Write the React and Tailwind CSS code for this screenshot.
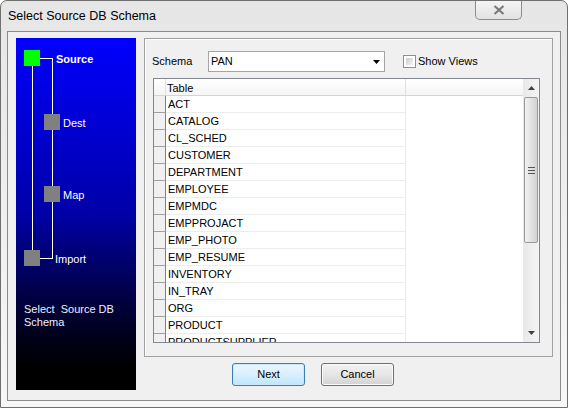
import React from 'react'

const rows = [
  'ACT', 'CATALOG', 'CL_SCHED', 'CUSTOMER', 'DEPARTMENT', 'EMPLOYEE', 'EMPMDC',
  'EMPPROJACT', 'EMP_PHOTO', 'EMP_RESUME', 'INVENTORY', 'IN_TRAY', 'ORG', 'PRODUCT',
  'PRODUCTSUPPLIER',
]

const font = { fontFamily: '"Liberation Sans", Arial, sans-serif' }

function WizardPanel() {
  return (
    <div className="relative w-[120px] h-[352px] shrink-0 bg-gradient-to-b from-[#0000ff] via-[#0000a8] to-[#000000] text-white text-[11px]">
      {/* tree lines and squares */}
      <svg className="absolute left-0 top-0" width="120" height="240">
        <line x1="16.5" y1="28" x2="16.5" y2="212" stroke="#fff" strokeWidth="1" />
        <line x1="24" y1="20.5" x2="36.5" y2="20.5" stroke="#fff" strokeWidth="1" />
        <line x1="36.5" y1="20" x2="36.5" y2="221" stroke="#fff" strokeWidth="1" />
        <line x1="24" y1="220.5" x2="37" y2="220.5" stroke="#fff" strokeWidth="1" />
        <rect x="8" y="12" width="16" height="16" fill="#00ff00" />
        <rect x="28" y="76" width="16" height="16" fill="#808080" />
        <rect x="28" y="148" width="16" height="16" fill="#808080" />
        <rect x="8" y="212" width="16" height="16" fill="#808080" />
      </svg>
      <span className="absolute left-[40px] top-[13px] font-bold">Source</span>
      <span className="absolute left-[47px] top-[77px]">Dest</span>
      <span className="absolute left-[47px] top-[149px]">Map</span>
      <span className="absolute left-[39px] top-[213px]">Import</span>
      <div className="absolute left-[8px] top-[265px] leading-[13px] text-[#f0f0ff]">
        Select&nbsp; Source DB<br />Schema
      </div>
    </div>
  )
}

function ScrollBar() {
  return (
    <div className="w-[16px] shrink-0 flex flex-col bg-gradient-to-r from-[#e8e8e8] to-[#f4f4f4]">
      <div className="h-[18px] flex items-center justify-center">
        <svg width="7" height="4"><path d="M0 4 L3.5 0 L7 4 Z" fill="#404040" /></svg>
      </div>
      <div className="mx-[1px] h-[146px] rounded-[2px] border border-[#9a9a9a] bg-gradient-to-r from-[#f3f3f3] via-[#e2e2e2] to-[#d2d2d2] flex flex-col items-center justify-center gap-[2px]">
        <div className="w-[7px] h-[1px] bg-[#555]" />
        <div className="w-[7px] h-[1px] bg-[#555]" />
        <div className="w-[7px] h-[1px] bg-[#555]" />
      </div>
      <div className="flex-1" />
      <div className="h-[18px] flex items-center justify-center">
        <svg width="7" height="4"><path d="M0 0 L7 0 L3.5 4 Z" fill="#404040" /></svg>
      </div>
    </div>
  )
}

function TableGrid() {
  return (
    <div className="ml-[8px] mt-[6px] w-[387px] h-[265px] border border-[#828790] bg-white flex overflow-hidden">
      <div className="flex-1 flex flex-col overflow-hidden">
        <div className="flex h-[17px] shrink-0 border-b border-[#d5d5d5] bg-gradient-to-b from-white to-[#f5f5f5]">
          <div className="w-[12px] border-r border-[#e0e0e0]" />
          <div className="w-[240px] border-r border-[#e0e0e0] pl-[1px] leading-[18px] text-[11px] text-black">Table</div>
          <div className="flex-1" />
        </div>
        {rows.map((r) => (
          <div key={r} className="flex h-[17px] shrink-0">
            <div className="w-[12px] bg-[#f0f0f0] border-b border-[#a0a0a0] border-r border-r-[#808080]" />
            <div className="w-[240px] border-b border-r border-[#ececec] pl-[2px] leading-[17px] text-[11px] text-black">{r}</div>
            <div className="flex-1" />
          </div>
        ))}
      </div>
      <ScrollBar />
    </div>
  )
}

export default function App() {
  return (
    <div className="w-[568px] h-[408px] overflow-hidden bg-white" style={font}>
      <div className="w-[568px] h-[408px] rounded-t-[7px] border border-[#6f6f6f] bg-gradient-to-b from-[#e6e6e6] via-[#efefef] to-[#f7f7f7] flex flex-col">
        {/* title bar */}
        <div className="h-[30px] shrink-0 flex items-start justify-between">
          <div className="pl-[7px] pt-[6px] text-[12.5px] text-black">Select Source DB Schema</div>
          <div className="mr-[45px] w-[47px] h-[19px] rounded-b-[5px] border border-t-0 border-[#8c8c8c] bg-gradient-to-b from-[#f4f4f4] to-[#e2e2e2] flex items-center justify-center">
            <svg width="12" height="10" viewBox="0 0 12 10">
              <path d="M1.5 1 L10.5 9 M10.5 1 L1.5 9" stroke="#7a7a7a" strokeWidth="2.2" />
            </svg>
          </div>
        </div>
        {/* client area */}
        <div className="ml-[6px] w-[554px] h-[370px] border border-[#8a8a8a] bg-[#f0f0f0] flex pl-[8px] pt-[6px]">
          <WizardPanel />
          <div className="ml-[8px] flex flex-col">
            <div className="w-[409px] h-[319px] border border-[#a0a0a0] shadow-[inset_1px_1px_0_#ffffff] flex flex-col">
              <div className="flex items-center mt-[12px] h-[21px] text-[11px] text-black">
                <span className="ml-[7px] w-[56px]">Schema</span>
                <div className="w-[177px] h-[21px] border border-[#a5a5a5] bg-white flex items-center justify-between">
                  <span className="pl-[2px]">PAN</span>
                  <svg className="mr-[4px]" width="7" height="4"><path d="M0 0 L7 0 L3.5 4 Z" fill="#000" /></svg>
                </div>
                <div className="ml-[18px] w-[13px] h-[13px] border border-[#8f8f8f] bg-white p-[2px]">
                  <div className="w-full h-full bg-gradient-to-br from-[#cbcbcb] to-[#f4f4f4]" />
                </div>
                <span className="ml-[2px]">Show Views</span>
              </div>
              <TableGrid />
            </div>
            <div className="flex mt-[6px] ml-[88px] gap-[16px] text-[11px] text-black">
              <button className="w-[73px] h-[23px] rounded-[3px] border border-[#3c7fb1] bg-gradient-to-b from-[#eaf6fd] via-[#d9f0fc] to-[#bee6fd] shadow-[inset_0_0_0_1px_#c8e8fa]">Next</button>
              <button className="w-[73px] h-[23px] rounded-[3px] border border-[#707070] bg-gradient-to-b from-[#f2f2f2] via-[#e6e6e6] to-[#d2d2d2] shadow-[inset_0_0_0_1px_#fbfbfb]">Cancel</button>
            </div>
          </div>
        </div>
      </div>
    </div>
  )
}
